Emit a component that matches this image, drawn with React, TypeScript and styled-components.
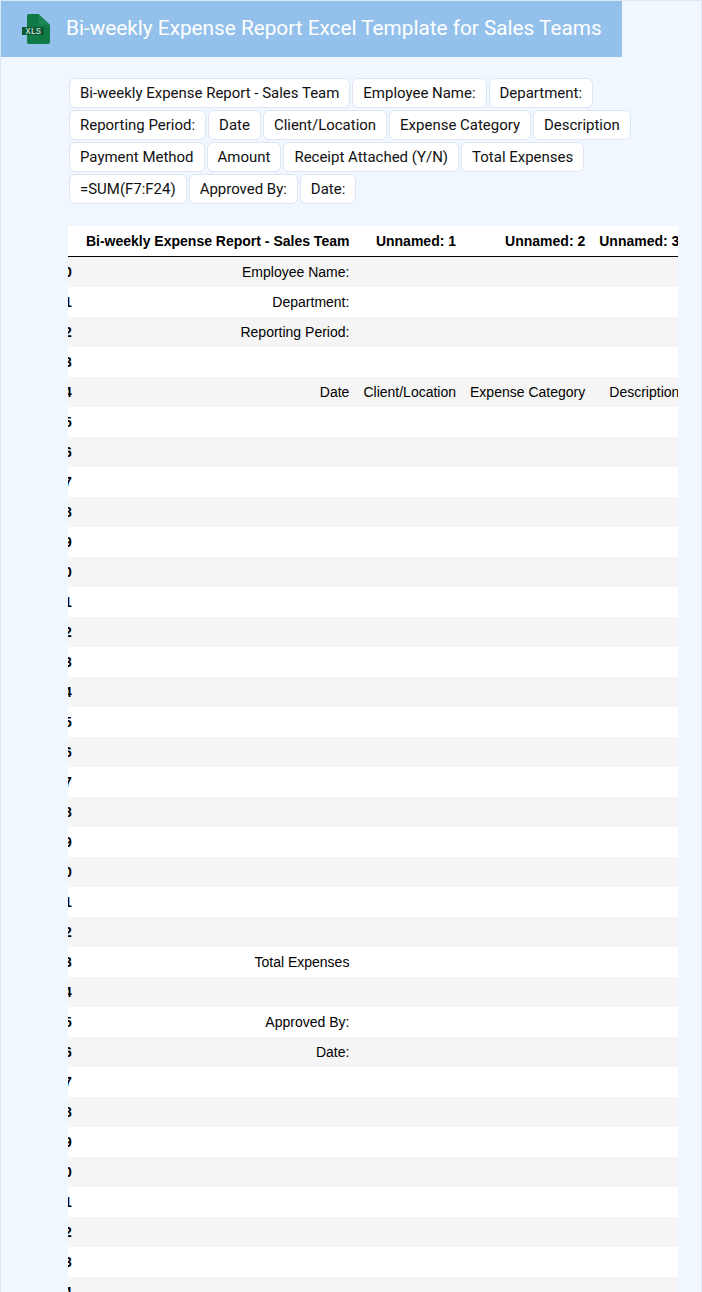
import React from "react";
import styled, { createGlobalStyle } from "styled-components";

const tags = [
  "Bi-weekly Expense Report - Sales Team",
  "Employee Name:",
  "Department:",
  "Reporting Period:",
  "Date",
  "Client/Location",
  "Expense Category",
  "Description",
  "Payment Method",
  "Amount",
  "Receipt Attached (Y/N)",
  "Total Expenses",
  "=SUM(F7:F24)",
  "Approved By:",
  "Date:",
];

const columns = [
  "Bi-weekly Expense Report - Sales Team",
  "Unnamed: 1",
  "Unnamed: 2",
  "Unnamed: 3",
];

const filled: Record<number, string[]> = {
  0: ["Employee Name:"],
  1: ["Department:"],
  2: ["Reporting Period:"],
  4: ["Date", "Client/Location", "Expense Category", "Description"],
  23: ["Total Expenses"],
  25: ["Approved By:"],
  26: ["Date:"],
};

const rowIndexes = Array.from({ length: 35 }, (_, i) => i);

const App: React.FC = () => {
  return (
    <Page>
      <GlobalStyle />
      <Header>
        <FileIcon viewBox="0 0 28 30" width="28" height="30">
          <path d="M7 0h9.5L28 11v17a2 2 0 0 1-2 2H7a2 2 0 0 1-2-2V2a2 2 0 0 1 2-2z" fill="#0f7a45" />
          <path d="M16.5 0L28 11h-9a2.5 2.5 0 0 1-2.5-2.5z" fill="#1d8455" />
          <rect x="0" y="13" width="22" height="8" fill="#0b5a35" />
          <text x="3.6" y="20" fontFamily="Liberation Mono, monospace" fontSize="8.5" fill="#e6f5ec">
            XLS
          </text>
        </FileIcon>
        <Title>Bi-weekly Expense Report Excel Template for Sales Teams</Title>
      </Header>
      <Content>
        <TagList>
          {tags.map((tag) => (
            <Tag key={tag}>{tag}</Tag>
          ))}
        </TagList>
        <TableWrap>
          <Table>
            <thead>
              <tr>
                <IndexHead />
                {columns.map((c) => (
                  <HeadCell key={c}>{c}</HeadCell>
                ))}
              </tr>
            </thead>
            <tbody>
              {rowIndexes.map((i) => (
                <Row key={i}>
                  <IndexCell>{i}</IndexCell>
                  {columns.map((_, c) => (
                    <Cell key={c}>{filled[i]?.[c] ?? ""}</Cell>
                  ))}
                </Row>
              ))}
            </tbody>
          </Table>
        </TableWrap>
      </Content>
    </Page>
  );
};

export default App;

const GlobalStyle = createGlobalStyle`
  html, body {
    margin: 0;
    height: 1292px;
    overflow: hidden;
    background: #f0f7ff;
  }
`;

const Page = styled.div`
  height: 1292px;
  box-sizing: border-box;
  border: 1px solid #dce8f4;
  border-bottom: none;
  overflow: hidden;
  font-family: Roboto, sans-serif;
`;

const Header = styled.header`
  width: 621px;
  height: 56px;
  background: #93c1ec;
  display: flex;
  align-items: center;
  gap: 16px;
  padding-left: 21px;
  box-sizing: border-box;
`;

const FileIcon = styled.svg`
  flex: none;
`;

const Title = styled.h1`
  margin: 0 0 2px;
  font-size: 20.76px;
  font-weight: 400;
  color: #fff;
  white-space: nowrap;
`;

const Content = styled.main`
  width: 610px;
  margin: 21px 0 0 67px;
`;

const TagList = styled.div`
  display: flex;
  flex-wrap: wrap;
  gap: 2px;
  padding: 0 1px;
`;

const Tag = styled.span`
  height: 30px;
  box-sizing: border-box;
  padding: 0 10px;
  display: flex;
  align-items: center;
  background: #fff;
  border: 1px solid #dde6f2;
  border-radius: 6px;
  font-size: 14.97px;
  color: #111;
  white-space: nowrap;
`;

const TableWrap = styled.div`
  margin-top: 22px;
  overflow: hidden;
`;

const Table = styled.table`
  margin-left: -18.7px;
  border-collapse: separate;
  border-spacing: 0;
  background: #fff;
  font-family: "Liberation Sans", Arial, sans-serif;
  font-size: 14px;
  color: #000;
`;

const HeadCell = styled.th`
  height: 31px;
  padding: 0 7px 1px;
  text-align: right;
  font-weight: 700;
  white-space: nowrap;
  border-bottom: 1px solid #000;
  box-sizing: border-box;
`;

const IndexHead = styled(HeadCell)`
  width: 35px;
`;

const Row = styled.tr`
  height: 30px;
  &:nth-child(odd) {
    background: #f5f5f5;
  }
`;

const Cell = styled.td`
  padding: 0 7px;
  text-align: right;
  white-space: nowrap;
`;

const IndexCell = styled.th`
  padding: 0 7px;
  text-align: right;
  font-weight: 700;
`;
